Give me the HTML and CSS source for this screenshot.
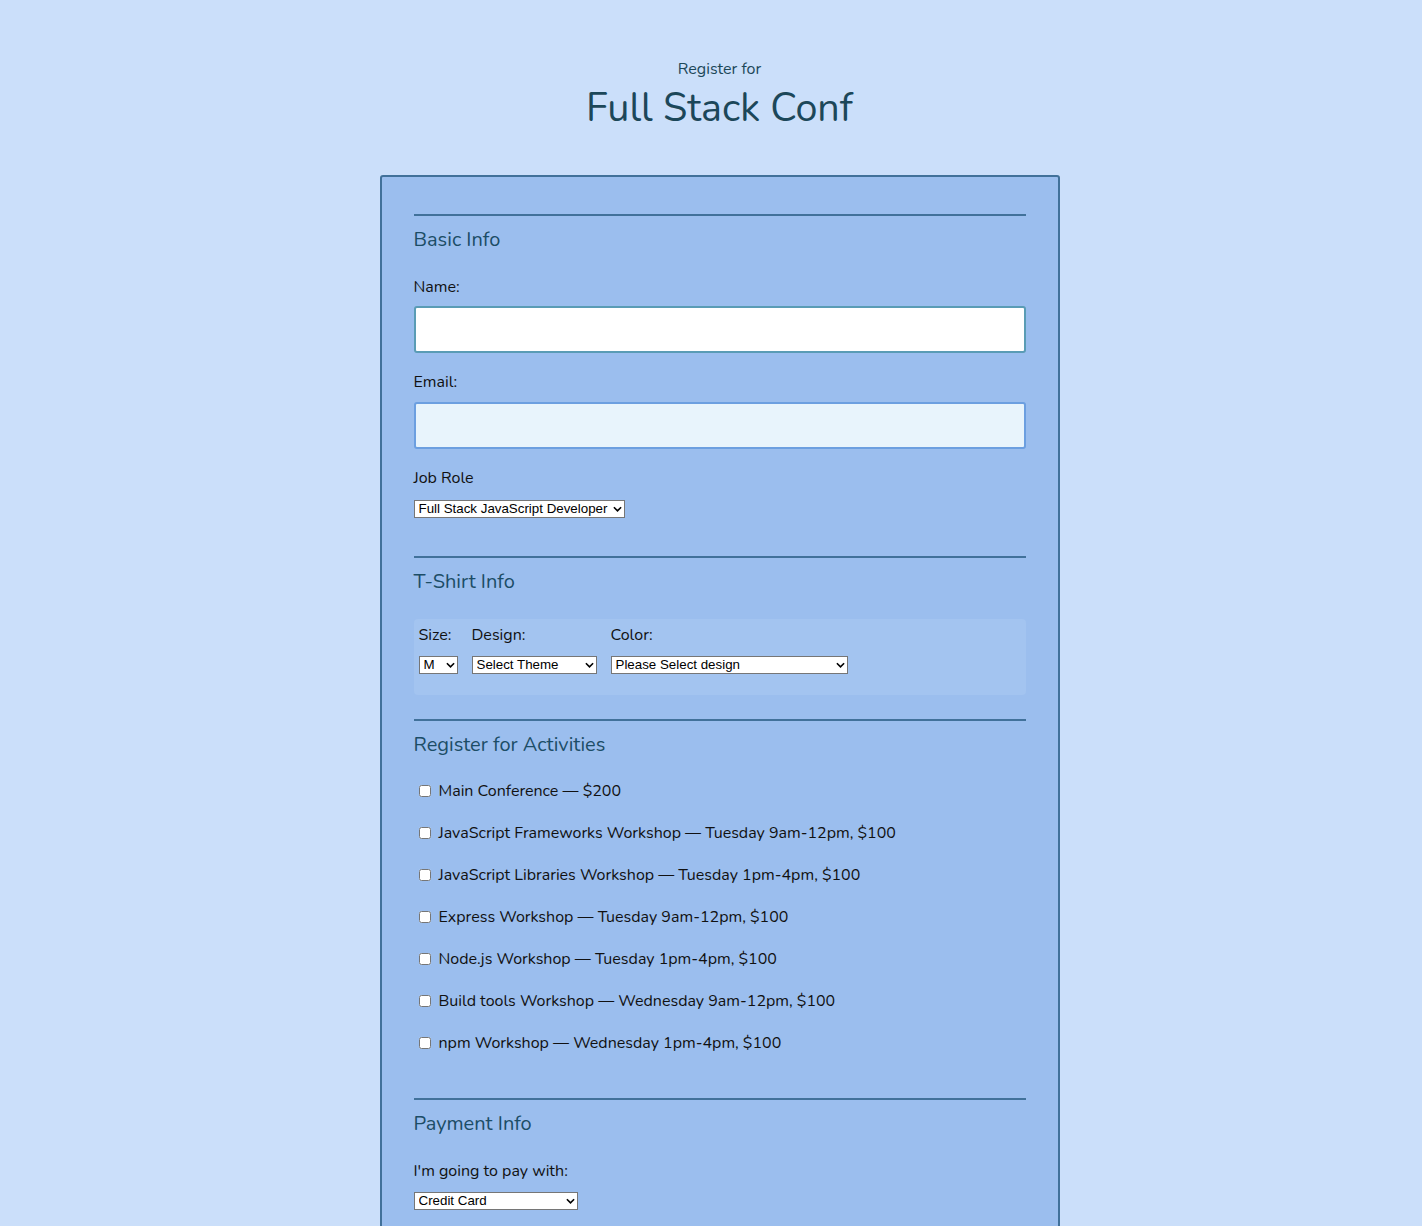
FILE: index.html
```html
<!DOCTYPE html>
<html>
<head>
<meta charset="utf-8">
<link rel="stylesheet" href="styles.css">
</head>
<body>
<header class="header">
  <p class="pre">Register for</p>
  <h1 class="title">Full Stack Conf</h1>
</header>
<form class="form">
  <section class="fs">
    <h2 class="legend">Basic Info</h2>
    <label class="lbl first">Name:</label>
    <input class="txt" type="text">
    <label class="lbl">Email:</label>
    <input class="txt email" type="text">
    <label class="lbl">Job Role</label>
    <span class="sel sel-job"><select><option>Full Stack JavaScript Developer</option></select><svg class="chev" viewBox="0 0 10 6" width="9" height="6"><path d="M1 1l4 4 4-4" fill="none" stroke="#000" stroke-width="1.8"/></svg></span>
  </section>
  <section class="fs fs-shirt">
    <h2 class="legend">T-Shirt Info</h2>
    <div class="shirt">
      <div class="col">
        <label class="lbl sm">Size:</label>
        <span class="sel sel-size"><select><option>M</option></select><svg class="chev" viewBox="0 0 10 6" width="9" height="6"><path d="M1 1l4 4 4-4" fill="none" stroke="#000" stroke-width="1.8"/></svg></span>
      </div>
      <div class="col">
        <label class="lbl sm">Design:</label>
        <span class="sel sel-design"><select><option>Select Theme</option></select><svg class="chev" viewBox="0 0 10 6" width="9" height="6"><path d="M1 1l4 4 4-4" fill="none" stroke="#000" stroke-width="1.8"/></svg></span>
      </div>
      <div class="col">
        <label class="lbl sm">Color:</label>
        <span class="sel sel-color"><select><option>Please Select design</option></select><svg class="chev" viewBox="0 0 10 6" width="9" height="6"><path d="M1 1l4 4 4-4" fill="none" stroke="#000" stroke-width="1.8"/></svg></span>
      </div>
    </div>
  </section>
  <section class="fs fs-act">
    <h2 class="legend">Register for Activities</h2>
    <label class="act"><input type="checkbox"> Main Conference — $200</label>
    <label class="act"><input type="checkbox"> JavaScript Frameworks Workshop — Tuesday 9am-12pm, $100</label>
    <label class="act"><input type="checkbox"> JavaScript Libraries Workshop — Tuesday 1pm-4pm, $100</label>
    <label class="act"><input type="checkbox"> Express Workshop — Tuesday 9am-12pm, $100</label>
    <label class="act"><input type="checkbox"> Node.js Workshop — Tuesday 1pm-4pm, $100</label>
    <label class="act"><input type="checkbox"> Build tools Workshop — Wednesday 9am-12pm, $100</label>
    <label class="act"><input type="checkbox"> npm Workshop — Wednesday 1pm-4pm, $100</label>
  </section>
  <section class="fs fs-pay">
    <h2 class="legend">Payment Info</h2>
    <label class="lbl first">I'm going to pay with:</label>
    <span class="sel sel-pay"><select><option>Credit Card</option></select><svg class="chev" viewBox="0 0 10 6" width="9" height="6"><path d="M1 1l4 4 4-4" fill="none" stroke="#000" stroke-width="1.8"/></svg></span>
  </section>
</form>
</body>
</html>
```
FILE: styles.css
```css
html, body {
  margin: 0;
  padding: 0;
}
body {
  background: #cbdffa;
  font-family: "Nunito", "Lato", "Open Sans", sans-serif;
  color: #111;
  padding-left: 17px;
}
.header {
  text-align: center;
  padding-top: 59px;
  color: #1c4759;
}
.pre {
  margin: 0;
  font-size: 16px;
  line-height: 20px;
}
.title {
  margin: 7px 0 0;
  font-size: 39.5px;
  font-weight: 400;
  line-height: 44px;
}
.form {
  width: 612px;
  margin: 45px auto 0;
  padding: 37px 32px 60px;
  background: #9bbeee;
  border: 2px solid #41719a;
  border-radius: 3px;
}
.fs {
  border-top: 2px solid #41719a;
  display: flex;
  flex-direction: column;
  align-items: flex-start;
  padding-bottom: 38px;
}
.fs-shirt { padding-bottom: 24px; }
.fs-act { padding-bottom: 45px; }
.legend {
  margin: 12px 0 0;
  font-size: 20px;
  font-weight: 400;
  line-height: 24px;
  color: #1c4d66;
}
.lbl {
  display: block;
  font-size: 16px;
  line-height: 20px;
  margin-top: 19px;
  margin-bottom: 10px;
  color: #111;
}
.lbl.first { margin-top: 25px; margin-bottom: 9px; }
.txt {
  box-sizing: border-box;
  width: 612px;
  height: 47px;
  margin: 0;
  border: 2px solid #5a9cb5;
  border-radius: 3px;
  background: #fff;
}
.email {
  background: #e8f4fc;
  border-color: #6c9fe0;
}
.sel {
  position: relative;
  display: inline-block;
  line-height: 0;
  margin-top: 2px;
}
.sel select {
  -webkit-appearance: none;
  appearance: none;
  box-sizing: border-box;
  height: 18px;
  margin: 0;
  padding: 0 13px 0 4px;
  border: 1px solid #767676;
  border-radius: 0;
  background: #fff;
  font-family: "Liberation Sans", Arial, sans-serif;
  font-size: 13.33px;
  line-height: 16px;
  color: #000;
}
.chev {
  position: absolute;
  right: 3px;
  top: 6px;
  pointer-events: none;
}
.sel-job select { width: 211px; }
.sel-size select { width: 39px; }
.sel-design select { width: 125px; }
.sel-color select { width: 237px; }
.sel-pay select { width: 164px; }
.shirt {
  margin-top: 25px;
  width: 612px;
  box-sizing: border-box;
  background: #a3c4f0;
  border-radius: 4px;
  padding: 6px 5px 21px;
  display: flex;
  gap: 14px;
}
.col {
  display: flex;
  flex-direction: column;
  align-items: flex-start;
}
.lbl.sm {
  margin-top: 0;
  margin-bottom: 9px;
}
.act {
  display: flex;
  align-items: center;
  font-size: 16px;
  line-height: 20px;
  margin-top: 22px;
  color: #111;
}
.act:first-of-type { margin-top: 24px; }
.act input {
  margin: 0 8px 0 5px;
  width: 12px;
  height: 12px;
}
```
